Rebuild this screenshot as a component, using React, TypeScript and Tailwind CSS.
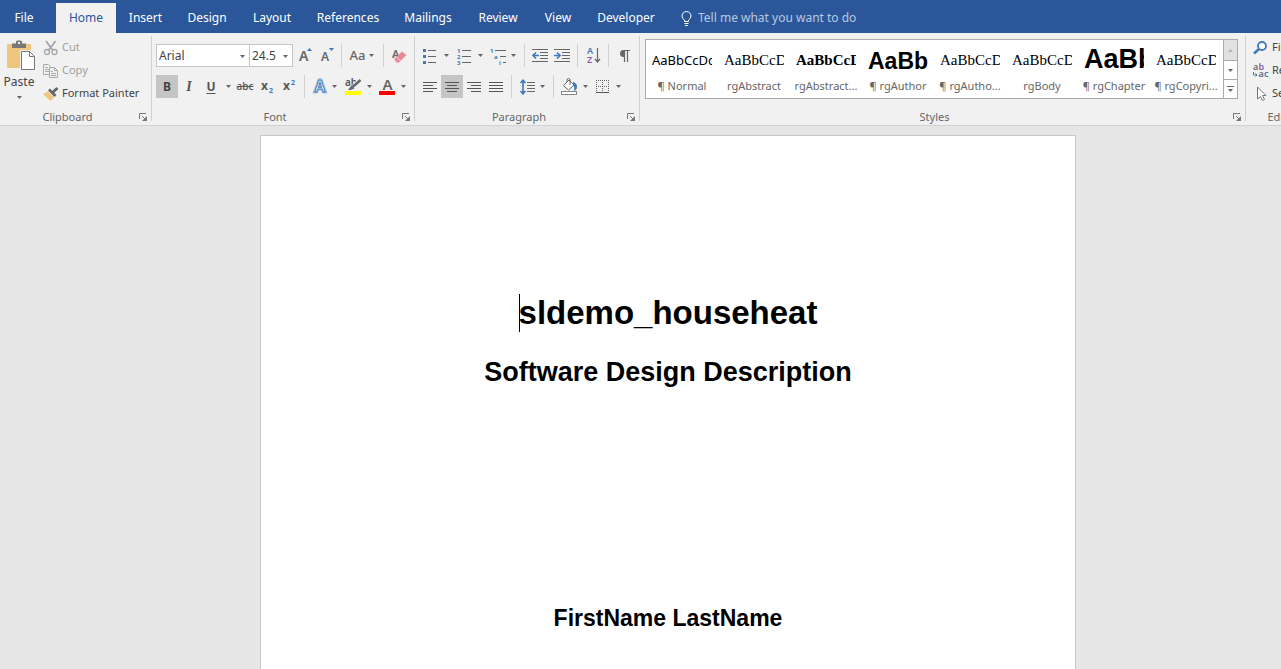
import type { ReactNode } from "react";

const tabs = [
  { name: "File", box: "w-12 mr-2" },
  { name: "Home", box: "w-[60px]" },
  { name: "Insert", box: "w-[59px]" },
  { name: "Design", box: "w-[64px]" },
  { name: "Layout", box: "w-[66px]" },
  { name: "References", box: "w-[86px]" },
  { name: "Mailings", box: "w-[74px]" },
  { name: "Review", box: "w-[66px]" },
  { name: "View", box: "w-[54px]" },
  { name: "Developer", box: "w-[82px]" },
];

const times = "font-['Liberation_Serif',serif] text-[15px]";
const arial = "font-['Liberation_Sans',sans-serif] font-bold";

const styles = [
  { name: "¶ Normal", sample: "AaBbCcDc", look: "pt-1 text-[13px]" },
  { name: "rgAbstract", sample: "AaBbCcD", look: `pt-1 ${times}` },
  { name: "rgAbstract...", sample: "AaBbCcD", look: `pt-1 ${times} font-bold` },
  { name: "¶ rgAuthor", sample: "AaBb", look: `pt-1 ${arial} text-[23px]` },
  { name: "¶ rgAutho...", sample: "AaBbCcD", look: `pt-1 ${times}` },
  { name: "rgBody", sample: "AaBbCcD", look: `pt-1 ${times}` },
  { name: "¶ rgChapter", sample: "AaBb", look: `pt-0.5 ${arial} text-[27px]` },
  { name: "¶ rgCopyri...", sample: "AaBbCcD", look: `pt-1 ${times}` },
];

const sans = "'Noto Sans', sans-serif";

function Icon({ w, h, children }: { w: number; h: number; children: ReactNode }) {
  return (
    <svg width={w} height={h} viewBox={`0 0 ${w} ${h}`} fill="none" aria-hidden="true" className="shrink-0 overflow-visible">
      {children}
    </svg>
  );
}

function Tool({ label, box = "w-[22px]", children }: { label: string; box?: string; children: ReactNode }) {
  return (
    <button type="button" aria-label={label} className={`flex h-full shrink-0 items-center justify-center ${box}`}>
      {children}
    </button>
  );
}

function Caret({ color = "#666" }: { color?: string }) {
  return (
    <Icon w={5} h={3}>
      <path d="M0 0h5L2.5 3z" fill={color} />
    </Icon>
  );
}

function More({ label, box = "w-3" }: { label: string; box?: string }) {
  return (
    <Tool label={label} box={box}>
      <Caret />
    </Tool>
  );
}

function Sep({ box }: { box: string }) {
  return <span className={`h-full w-px shrink-0 bg-[#d0d0d0] ${box}`} />;
}

function Row({ children, box = "pl-1" }: { children: ReactNode; box?: string }) {
  return <div className={`flex h-[23px] items-center ${box}`}>{children}</div>;
}

function Group({ name, box, children }: { name: string; box: string; children: ReactNode }) {
  return (
    <section aria-label={name} className={`flex h-[92px] shrink-0 ${box}`}>
      <div className="flex min-w-0 flex-1 flex-col">
        {children}
        <div className="mt-auto flex h-4 items-center">
          <span className="flex-1 text-center text-[#666]">{name}</span>
          <button type="button" aria-label={`${name} settings`} className="flex w-4 justify-center">
            <Icon w={8} h={8}>
              <path d="M.5 6V.5H7M3 3l3 3" stroke="#777" />
              <path d="M8 3v5H3z" fill="#777" />
            </Icon>
          </button>
        </div>
      </div>
      <span className="mb-1 mt-[3px] w-px bg-[#d0d0d0]" />
    </section>
  );
}

function Picker({ label, value, options, box }: { label: string; value: string; options: string[]; box: string }) {
  return (
    <div className={`relative h-full shrink-0 ${box}`}>
      <select
        aria-label={label}
        defaultValue={value}
        className="h-full w-full appearance-none border border-[#c6c6c6] bg-white pl-[2px] text-xs text-[#444] outline-none"
      >
        {options.map((o) => (
          <option key={o}>{o}</option>
        ))}
      </select>
      <span className="pointer-events-none absolute right-[5px] top-[11px]">
        <Caret />
      </span>
    </div>
  );
}

function Lines({ rows }: { rows: [number, number][] }) {
  return (
    <Icon w={14} h={12}>
      {rows.map(([x, w], i) => (
        <rect key={i} x={x} y={1 + i * 3} width={w} height={1} fill="#555" />
      ))}
    </Icon>
  );
}

function Indent({ arrow }: { arrow: string }) {
  return (
    <Icon w={16} h={13}>
      <path d="M0 .5h16M8 3.5h8M8 6.5h8M8 9.5h8M0 12.5h16" stroke="#666" />
      <path d={arrow} stroke="#3f7ab8" strokeWidth="1.7" />
    </Icon>
  );
}

function Clipboard() {
  return (
    <Group name="Clipboard" box="w-[152px]">
      <div className="flex">
        <button type="button" className="flex w-[38px] flex-col items-center pt-[7px]">
          <span className="pl-1">
            <Icon w={29} h={32}>
              <rect x="0" y="4" width="24" height="24" rx="1" fill="#eec67e" />
              <path d="M5 3.5h4V2q0-1.500 1.500-1.500h3Q15 .5 15 2v1.500h4v4.500H5z" fill="#777" />
              <rect x="11" y="2" width="2" height="2" fill="#f1f1f1" />
              <path d="M13 10h10l6 6v15H13z" fill="#f1f1f1" />
              <path d="M14.500 11.500h8l5 5v13h-13z" fill="#fff" stroke="#777" />
              <path d="M22.500 11.500v5h5" stroke="#777" />
            </Icon>
          </span>
          <span className="text-xs leading-5">Paste</span>
          <span className="pt-1">
            <Caret />
          </span>
        </button>
        <div className="flex flex-col pl-[5px] pt-[3px]">
          <button type="button" className="flex h-[23px] items-center gap-[3px] text-[#a0a0a0]">
            <Icon w={16} h={16}>
              <path d="M3 1l7 9.500M12.500 1l-7 9.500" stroke="#a6a6a6" strokeWidth="1.800" />
              <circle cx="4" cy="12" r="2.500" stroke="#a6a6a6" strokeWidth="1.300" />
              <circle cx="11.500" cy="12" r="2.500" stroke="#a6a6a6" strokeWidth="1.300" />
            </Icon>
            Cut
          </button>
          <button type="button" className="flex h-[23px] items-center gap-[3px] text-[#a0a0a0]">
            <Icon w={16} h={16}>
              <path d="M6 11.500H.5v-10h5l2 2V5" stroke="#aaa" />
              <path d="M2 4.500h3M2 6.500h4M2 8.500h4" stroke="#aaa" />
              <path d="M6.500 4.500h5l3 3v7h-8z" stroke="#aaa" />
              <path d="M11.500 4.500v3h3M8 8.500h2M8 10.500h5M8 12.500h5" stroke="#aaa" />
            </Icon>
            Copy
          </button>
          <button type="button" className="flex h-[23px] items-center gap-[3px] whitespace-nowrap">
            <Icon w={16} h={16}>
              <path d="M0 8l5-2.500 6 6L7.500 15z" fill="#eec67e" />
              <path d="M5 4.500l2-2L13.500 9l-2 2z" fill="#666" />
              <path d="M9.500 6.500L14.500 2" stroke="#666" strokeWidth="3" />
            </Icon>
            Format Painter
          </button>
        </div>
      </div>
    </Group>
  );
}

function FontGroup() {
  return (
    <Group name="Font" box="w-[263px]">
      <div className="flex flex-col gap-2 pt-[11px]">
        <Row>
          <Picker label="Font name" value="Arial" options={["Arial", "Times New Roman"]} box="w-[94px]" />
          <Picker label="Font size" value="24.5" options={["12", "24.5", "36"]} box="-ml-px w-[44px]" />
          <Tool label="Grow font" box="ml-px w-[22px]">
            <Icon w={14} h={16}>
              <text x="1" y="13" fontFamily={sans} fontSize="14" fontWeight="600" fill="#666">A</text>
              <path d="M9 3h5l-2.500-3z" fill="#3f7ab8" />
            </Icon>
          </Tool>
          <Tool label="Shrink font">
            <Icon w={14} h={16}>
              <text x="1" y="13" fontFamily={sans} fontSize="12" fontWeight="600" fill="#666">A</text>
              <path d="M9 0h5l-2.500 3z" fill="#3f7ab8" />
            </Icon>
          </Tool>
          <Sep box="ml-[3px]" />
          <Tool label="Change case" box="ml-0.5 w-[36px] gap-1">
            <span className="text-[13px] font-medium text-[#666]">Aa</span>
            <Caret />
          </Tool>
          <Sep box="ml-[3px]" />
          <Tool label="Clear formatting" box="ml-1 w-[22px]">
            <Icon w={16} h={16}>
              <text x="1" y="10" fontFamily={sans} fontSize="11" fontWeight="600" fill="#666">A</text>
              <path d="M3 11l8-7.500L15.500 7 8 14.500H5.500z" fill="#e88a9a" />
              <path d="M5.500 9l4 4" stroke="#f7d5da" />
            </Icon>
          </Tool>
        </Row>
        <Row>
          <Tool label="Bold" box="w-[22px] bg-[#c5c5c5]">
            <b className="text-xs text-[#444]">B</b>
          </Tool>
          <Tool label="Italic">
            <i className="font-['Liberation_Serif',serif] text-sm font-bold text-[#555]">I</i>
          </Tool>
          <Tool label="Underline">
            <b className="text-xs text-[#555] underline underline-offset-2">U</b>
          </Tool>
          <More label="Underline styles" />
          <Tool label="Strikethrough">
            <span className="text-[10px] font-medium text-[#555] line-through">abc</span>
          </Tool>
          <Tool label="Subscript">
            <Icon w={14} h={14}>
              <text x="1" y="10" fontFamily={sans} fontSize="12" fontWeight="700" fill="#555">x</text>
              <text x="9" y="13" fontFamily={sans} fontSize="7" fontWeight="700" fill="#3f7ab8">2</text>
            </Icon>
          </Tool>
          <Tool label="Superscript">
            <Icon w={14} h={14}>
              <text x="1" y="10" fontFamily={sans} fontSize="12" fontWeight="700" fill="#555">x</text>
              <text x="9" y="5" fontFamily={sans} fontSize="7" fontWeight="700" fill="#3f7ab8">2</text>
            </Icon>
          </Tool>
          <Sep box="ml-1" />
          <Tool label="Text effects" box="ml-[5px] w-5">
            <Icon w={16} h={16}>
              <text x="2.500" y="13" fontFamily={sans} fontSize="16" fontWeight="600" fill="#fff" stroke="#a9c8e8" strokeWidth="3">A</text>
              <text x="2.500" y="13" fontFamily={sans} fontSize="16" fontWeight="600" fill="#fff" stroke="#3f7ab8">A</text>
            </Icon>
          </Tool>
          <More label="Text effect options" box="w-2" />
          <Tool label="Highlight" box="ml-[5px] w-5">
            <Icon w={16} h={17}>
              <text x="0" y="8" fontFamily={sans} fontSize="10" fontWeight="600" fill="#555">ab</text>
              <path d="M15 2L7 10" stroke="#f1f1f1" strokeWidth="4" />
              <path d="M15.500 2L7.500 9" stroke="#666" strokeWidth="2.500" />
              <path d="M6.500 7.500l3 3-4 1.500H3z" fill="#666" />
              <rect y="13" width="16" height="4" fill="#ff0" />
            </Icon>
          </Tool>
          <More label="Highlight colours" />
          <Tool label="Font colour" box="ml-0.5 w-5">
            <Icon w={16} h={17}>
              <text x="3.500" y="12" fontFamily={sans} fontSize="15" fontWeight="600" fill="#666">A</text>
              <rect y="13" width="16" height="4" fill="#f00" />
            </Icon>
          </Tool>
          <More label="Font colours" />
        </Row>
      </div>
    </Group>
  );
}

function Paragraph() {
  return (
    <Group name="Paragraph" box="w-[225px]">
      <div className="flex flex-col gap-2 pt-[11px]">
        <Row box="pl-[5px]">
          <Tool label="Bullets" box="w-5">
            <Icon w={14} h={16}>
              <path d="M0 2.500h3M0 8.500h3M0 14.500h3" stroke="#3f7ab8" strokeWidth="3" />
              <path d="M5 2.500h8M5 8.500h8M5 14.500h8" stroke="#666" />
            </Icon>
          </Tool>
          <More label="Bullet styles" />
          <Tool label="Numbering" box="ml-0.5 w-5">
            <Icon w={14} h={16}>
              {["1", "2", "3"].map((n, i) => (
                <text key={n} x="0" y={5 + i * 6} fontFamily={sans} fontSize="6" fontWeight="700" fill="#3f7ab8">{n}</text>
              ))}
              <path d="M5 2.500h9M5 8.500h9M5 14.500h9" stroke="#666" />
            </Icon>
          </Tool>
          <More label="Number styles" />
          <Tool label="Multilevel list" box="ml-0.5 w-5">
            <Icon w={16} h={16}>
              <text x="0" y="5" fontFamily={sans} fontSize="6" fontWeight="700" fill="#3f7ab8">1</text>
              <text x="4" y="11" fontFamily={sans} fontSize="6" fontWeight="700" fill="#3f7ab8">a</text>
              <text x="9" y="17" fontFamily={sans} fontSize="6" fontWeight="700" fill="#3f7ab8">i</text>
              <path d="M5 2.500h11M10 8.500h6M13 14.500h3" stroke="#666" />
            </Icon>
          </Tool>
          <More label="List levels" box="w-2.5" />
          <Sep box="ml-1.5" />
          <Tool label="Decrease indent" box="ml-1 w-[22px]">
            <Indent arrow="M7 6.500H1.500M4 3.500l-3 3 3 3" />
          </Tool>
          <Tool label="Increase indent">
            <Indent arrow="M0 6.500h5.500M3 3.500l3 3-3 3" />
          </Tool>
          <Sep box="ml-1" />
          <Tool label="Sort" box="ml-1 w-[22px]">
            <Icon w={15} h={17}>
              <text x="1" y="7" fontFamily={sans} fontSize="9" fontWeight="600" fill="#3f7ab8">A</text>
              <text x="1" y="16" fontFamily={sans} fontSize="9" fontWeight="600" fill="#8a55b0">Z</text>
              <path d="M11.500 1v14M9 12l2.500 3 2.500-3" stroke="#666" strokeWidth="1.200" />
            </Icon>
          </Tool>
          <Sep box="ml-1" />
          <Tool label="Show marks" box="ml-1 w-[22px]">
            <Icon w={11} h={14}>
              <path d="M5.500 1v12M8.500 1v12M4 1.500h7" stroke="#666" strokeWidth="1.200" />
              <path d="M5.500 1v7H4.500a3.500 3.500 0 010-7z" fill="#666" />
            </Icon>
          </Tool>
        </Row>
        <Row>
          <Tool label="Align left">
            <Lines rows={[[0, 14], [0, 10], [0, 14], [0, 10]]} />
          </Tool>
          <Tool label="Center" box="w-[22px] bg-[#c5c5c5]">
            <Lines rows={[[0, 14], [2, 10], [0, 14], [2, 10]]} />
          </Tool>
          <Tool label="Align right">
            <Lines rows={[[0, 14], [4, 10], [0, 14], [4, 10]]} />
          </Tool>
          <Tool label="Justify">
            <Lines rows={[[0, 14], [0, 14], [0, 14], [0, 14]]} />
          </Tool>
          <Sep box="ml-1" />
          <Tool label="Line spacing" box="ml-[5px] w-5">
            <Icon w={15} h={16}>
              <path d="M3 1v14M.5 4L3 1.200 5.500 4M.5 12L3 14.800 5.500 12" stroke="#3f7ab8" strokeWidth="1.600" />
              <path d="M7 3.500h8M7 6.500h8M7 9.500h8M7 12.500h8" stroke="#666" />
            </Icon>
          </Tool>
          <More label="Line spacing options" box="w-2.5" />
          <Sep box="ml-1.5" />
          <Tool label="Shading" box="ml-[5px] w-5">
            <Icon w={17} h={17}>
              <path d="M2.500 7.500L8 2l5 5-5.500 5z" fill="#fff" stroke="#666" />
              <path d="M6 4V2.500Q6 .5 7.500.5T9 2.500V7" stroke="#666" />
              <path d="M12 4q4 1 4 4.500T13 13q1-4-1-6z" fill="#3f7ab8" />
              <rect x=".5" y="13.500" width="15" height="3" fill="#fff" stroke="#888" />
            </Icon>
          </Tool>
          <More label="Shading colours" />
          <Tool label="Borders" box="ml-px w-5">
            <Icon w={13} h={13}>
              <path d="M0 .5h13M0 6.500h13" stroke="#666" strokeDasharray="1 1" />
              <path d="M.5 0v12M6.500 0v12M12.500 0v12" stroke="#666" strokeDasharray="1 1" />
              <path d="M0 12.500h13" stroke="#555" />
            </Icon>
          </Tool>
          <More label="Border styles" />
        </Row>
      </div>
    </Group>
  );
}

function Styles() {
  return (
    <Group name="Styles" box="w-[606px]">
      <div className="flex pl-[5px] pt-1.5">
        <div className="flex h-[60px] border border-[#ababab] bg-white">
          <div className="flex w-[577px]">
            {styles.map((s, i) => (
              <button key={i} type="button" className="flex w-[72px] flex-col items-center">
                <span className={`flex h-[38px] w-[60px] items-center overflow-hidden whitespace-nowrap text-black ${s.look}`}>
                  {s.sample}
                </span>
                <span className="whitespace-nowrap leading-4 text-[#666]">{s.name}</span>
              </button>
            ))}
          </div>
          <div className="flex w-[14px] flex-col border-l border-[#ababab]">
            <button type="button" aria-label="Previous styles" className="flex h-5 items-center justify-center bg-[#e1e1e1]">
              <span className="rotate-180">
                <Caret color="#b5b5b5" />
              </span>
            </button>
            <button type="button" aria-label="Next styles" className="flex h-5 items-center justify-center border-y border-[#ababab]">
              <Caret />
            </button>
            <button type="button" aria-label="All styles" className="flex flex-1 items-center justify-center">
              <Icon w={7} h={6}>
                <path d="M0 .5h7" stroke="#666" />
                <path d="M1 3h5L3.500 6z" fill="#666" />
              </Icon>
            </button>
          </div>
        </div>
      </div>
    </Group>
  );
}

function Editing() {
  return (
    <Group name="Editing" box="w-[96px]">
      <div className="flex flex-col pl-[7px] pt-[3px]">
        <button type="button" className="flex h-[23px] items-center gap-[3px]">
          <Icon w={16} h={16}>
            <circle cx="9" cy="6" r="4" stroke="#3f7ab8" strokeWidth="1.800" fill="#fff" />
            <path d="M6 9l-5 4.500" stroke="#3f7ab8" strokeWidth="2.500" />
          </Icon>
          Find
        </button>
        <button type="button" className="flex h-[23px] items-center gap-[3px]">
          <Icon w={16} h={18}>
            <text x="0" y="8" fontFamily={sans} fontSize="9" fontWeight="600" fill="#666">a</text>
            <text x="5.500" y="8" fontFamily={sans} fontSize="9" fontWeight="600" fill="#8a55b0">b</text>
            <text x="5.500" y="15" fontFamily={sans} fontSize="9" fontWeight="600" fill="#666">a</text>
            <text x="11" y="15" fontFamily={sans} fontSize="9" fontWeight="600" fill="#3f7ab8">c</text>
            <path d="M.5 10v3H4M2.500 11.500L4 13l-1.500 1.500" stroke="#3f7ab8" />
          </Icon>
          Replace
        </button>
        <button type="button" className="flex h-[23px] items-center gap-[3px]">
          <Icon w={16} h={16}>
            <path d="M4.500 1v12l3-2.500 2 4 2-1-2-4h3.500z" fill="#fff" stroke="#777" />
          </Icon>
          Select
        </button>
      </div>
    </Group>
  );
}

export default function App() {
  return (
    <div className="flex h-screen flex-col overflow-hidden bg-[#e6e6e6] font-['Noto_Sans',sans-serif] text-xs text-[#444]">
      <nav className="flex h-[33px] shrink-0 bg-[#2b579a] pt-[3px] text-white">
        {tabs.map((t) => (
          <button
            key={t.name}
            type="button"
            className={`shrink-0 ${t.box} ${t.name === "Home" ? "bg-[#f1f1f1] text-[#2b579a]" : ""}`}
          >
            {t.name}
          </button>
        ))}
        <label className="flex items-center gap-1.5 pl-3.5">
          <Icon w={11} h={15}>
            <path d="M3.500 10.500V9Q1 7.500 1 5a4.500 4.500 0 019 0q0 2.500-2.500 4v1.500zM3.500 12.500h4M4 14.500h3" stroke="#fff" />
          </Icon>
          <input
            type="text"
            aria-label="Tell me what you want to do"
            placeholder="Tell me what you want to do"
            className="w-[200px] bg-transparent outline-none placeholder:text-[#b8c8e0]"
          />
        </label>
      </nav>
      <header className="flex shrink-0 overflow-hidden border-b border-[#d2d2d2] bg-[#f1f1f1] text-[11px]">
        <Clipboard />
        <FontGroup />
        <Paragraph />
        <Styles />
        <Editing />
      </header>
      <main className="flex min-h-0 flex-1 justify-center overflow-hidden pl-[55px] pt-[9px]">
        <article className="min-h-[1056px] w-full max-w-[816px] border border-[#c6c6c6] bg-white text-center font-['Liberation_Sans',sans-serif] font-bold text-black">
          <h1 className="pt-[158px] text-[33px] leading-[38px]">
            <span className="relative">
              <span className="absolute left-0 top-0 h-[38px] w-px bg-black" />
              sldemo_househeat
            </span>
          </h1>
          <h2 className="pt-6 text-[27px] leading-8">Software Design Description</h2>
          <p className="pt-[216px] text-[23px] leading-7">FirstName LastName</p>
        </article>
      </main>
    </div>
  );
}
